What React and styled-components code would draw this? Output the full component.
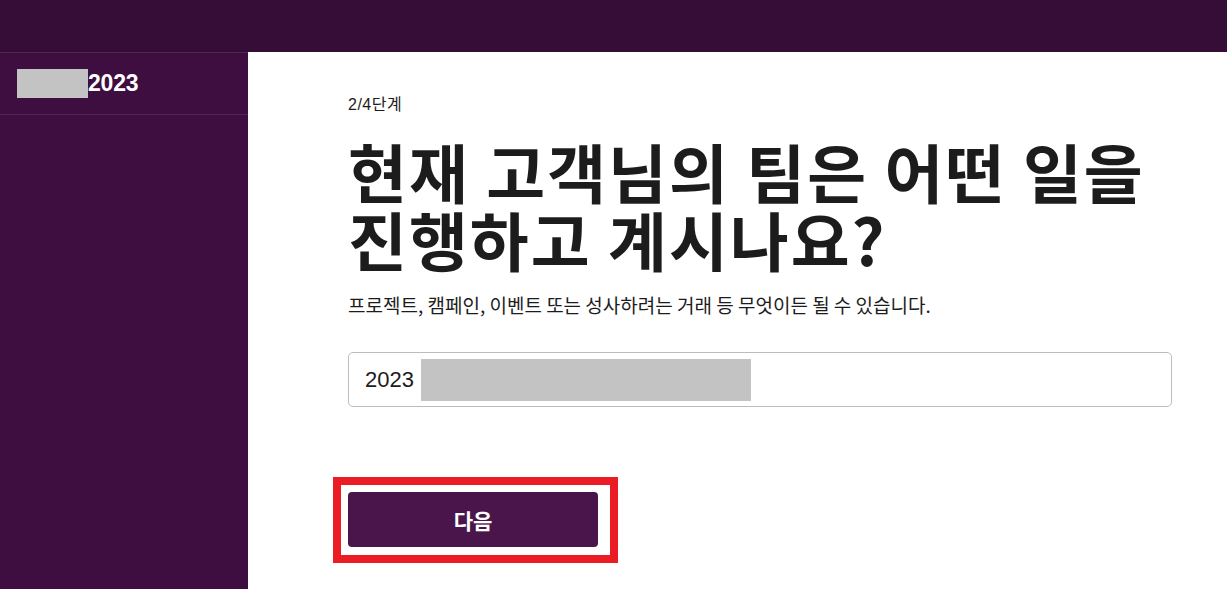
import React from "react";
import styled, { createGlobalStyle } from "styled-components";

const Global = createGlobalStyle`
  html, body { margin: 0; padding: 0; background: #ffffff; }
  body { font-family: "Liberation Sans", "Noto Sans CJK KR", sans-serif; }
  * { box-sizing: border-box; }
`;

const Page = styled.div`
  width: 1227px;
  height: 589px;
  display: grid;
  grid-template-rows: 52px 1fr;
  overflow: hidden;
`;

const TopBar = styled.header`
  background: #350d36;
`;

const Body = styled.div`
  display: grid;
  grid-template-columns: 248px 1fr;
  min-height: 0;
`;

const Sidebar = styled.aside`
  background: #3f0e40;
  border-top: 1px solid #52264f;
`;

const WorkspaceRow = styled.div`
  height: 62px;
  display: flex;
  align-items: center;
  padding-left: 17px;
  border-bottom: 1px solid #52264f;
`;

const Redacted = styled.span`
  display: inline-block;
  background: #c3c3c3;
  width: ${(p) => p.$w}px;
  height: ${(p) => p.$h}px;
`;

const WorkspaceName = styled.span`
  color: #ffffff;
  font-family: "Liberation Sans", sans-serif;
  font-weight: 700;
  font-size: 23px;
  letter-spacing: -0.2px;
`;

const Main = styled.main`
  padding: 43px 55px 0 100px;
  display: flex;
  flex-direction: column;
  align-items: flex-start;
  word-break: keep-all;
`;

const Step = styled.div`
  font-size: 16px;
  color: #1d1c1d;
  line-height: 20px;
  letter-spacing: 0.5px;
`;

const Heading = styled.h1`
  margin: 21px 0 0;
  font-family: "Noto Sans CJK KR", sans-serif;
  font-weight: 700;
  font-size: 64px;
  line-height: 68px;
  color: #1d1c1d;
  letter-spacing: 2px;
  word-break: keep-all;
`;

const Subtitle = styled.p`
  margin: 21px 0 0;
  font-family: "Noto Sans CJK KR", sans-serif;
  font-size: 19px;
  line-height: 24px;
  color: #1d1c1d;
`;

const InputBox = styled.div`
  margin-top: 35px;
  width: 100%;
  height: 55px;
  border: 1px solid #bcbcbc;
  border-radius: 5px;
  display: flex;
  align-items: center;
  padding-left: 16px;
  gap: 7px;
`;

const InputText = styled.span`
  font-family: "Liberation Sans", sans-serif;
  font-size: 22px;
  color: #1d1c1d;
`;

const ButtonFrame = styled.div`
  margin-top: 70px;
  margin-left: -15px;
  border: 8px solid #ec1c24;
  padding: 7px 12px 8px 7px;
`;

const NextButton = styled.button`
  width: 250px;
  height: 55px;
  border: none;
  border-radius: 4px;
  background: #4a154b;
  color: #ffffff;
  font-family: "Noto Sans CJK KR", sans-serif;
  font-weight: 700;
  font-size: 21px;
  cursor: pointer;
`;

export default function App() {
  return (
    <>
      <Global />
      <Page>
        <TopBar />
        <Body>
          <Sidebar>
            <WorkspaceRow>
              <Redacted $w={71} $h={29} />
              <WorkspaceName>2023</WorkspaceName>
            </WorkspaceRow>
          </Sidebar>
          <Main>
            <Step>2/4단계</Step>
            <Heading>현재 고객님의 팀은 어떤 일을 진행하고 계시나요?</Heading>
            <Subtitle>프로젝트, 캠페인, 이벤트 또는 성사하려는 거래 등 무엇이든 될 수 있습니다.</Subtitle>
            <InputBox>
              <InputText>2023</InputText>
              <Redacted $w={330} $h={42} />
            </InputBox>
            <ButtonFrame>
              <NextButton>다음</NextButton>
            </ButtonFrame>
          </Main>
        </Body>
      </Page>
    </>
  );
}
